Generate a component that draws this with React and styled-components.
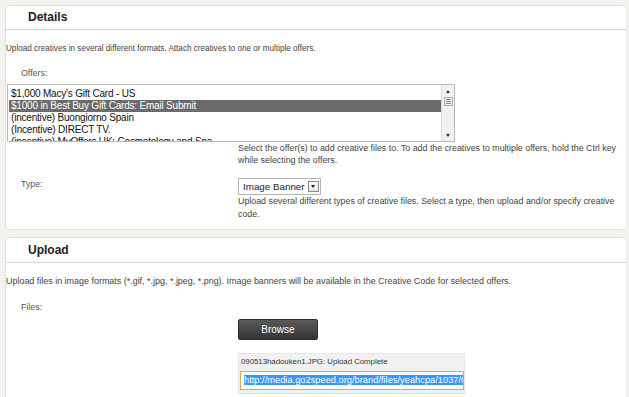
import React from 'react';
import styled, { createGlobalStyle } from 'styled-components';

const GlobalStyle = createGlobalStyle`
  html, body {
    margin: 0;
    padding: 0;
    background: #f3f2ee;
  }
  body {
    font-family: 'Liberation Sans', Arial, sans-serif;
    color: #3a3a3a;
  }
`;

const Page = styled.div`
  padding: 5px 2px 0 5px;
  height: 397px;
  overflow: hidden;
  box-sizing: border-box;
`;

const Panel = styled.section`
  background: #fff;
  border: 1px solid #e3e2dd;
  border-right: 1px solid #ecebe7;
  border-radius: 5px;
  padding-bottom: ${(p) => p.$pb || 8}px;
  margin-bottom: 7px;
`;

const PanelHeader = styled.h2`
  margin: 0;
  height: ${(p) => p.$h || 23}px;
  line-height: ${(p) => p.$h || 23}px;
  padding-left: 22px;
  font-size: 12px;
  font-weight: bold;
  color: #222;
  border-bottom: 1px solid #d6d6d6;
`;

const Intro = styled.p`
  margin: 12px 0 0 0;
  font-size: ${(p) => p.$fs || 8.4}px;
  line-height: 13px;
  color: #444;
`;

const Label = styled.div`
  padding-left: 15px;
  font-size: 8.8px;
  line-height: 13px;
  color: #555;
  margin-top: ${(p) => p.$mt || 0}px;
`;

const ListBox = styled.div`
  margin: 4px 0 0 1px;
  width: 448px;
  height: 58px;
  box-sizing: border-box;
  border: 1px solid #b9b9b9;
  display: flex;
  overflow: hidden;
  background: #fff;
`;

const ListItems = styled.div`
  flex: 1;
  padding-top: 3px;
  padding-left: 1px;
`;

const ListItem = styled.div`
  height: 12px;
  line-height: 12px;
  font-size: 10px;
  letter-spacing: -0.2px;
  padding-left: 2px;
  white-space: nowrap;
  color: ${(p) => (p.$selected ? '#fff' : '#111')};
  background: ${(p) => (p.$selected ? '#6b6b6b' : 'transparent')};
`;

const ScrollBar = styled.div`
  width: 12px;
  background: #f1f1f1;
  border-left: 1px solid #dcdcdc;
  display: flex;
  flex-direction: column;
  align-items: center;
`;

const Arrow = styled.div`
  width: 0;
  height: 0;
  border-left: 2.5px solid transparent;
  border-right: 2.5px solid transparent;
  ${(p) =>
    p.$up
      ? 'border-bottom: 3px solid #333; margin-top: 5px;'
      : 'border-top: 3px solid #333; margin-top: auto; margin-bottom: 4px;'}
`;

const Thumb = styled.div`
  width: 9px;
  height: 9px;
  margin-top: 4px;
  border: 1px solid #a9a9a9;
  background: #fafafa;
  box-sizing: border-box;
  display: flex;
  flex-direction: column;
  justify-content: center;
  align-items: center;
  gap: 1px;
  span {
    display: block;
    width: 5px;
    height: 1px;
    background: #888;
  }
`;

const FieldGrid = styled.div`
  display: grid;
  grid-template-columns: 232px 1fr;
  margin-top: ${(p) => p.$mt || 0}px;
  align-items: start;
`;

const Hint = styled.div`
  font-size: 8.85px;
  line-height: ${(p) => p.$lh || 12}px;
  color: #444;
  padding-right: 8px;
`;

const RowLabel = styled.div`
  padding-left: 15px;
  font-size: 8.8px;
  line-height: 17px;
  color: #555;
`;

const SelectBox = styled.div`
  display: inline-flex;
  align-items: center;
  height: 17px;
  box-sizing: border-box;
  border: 1px solid #b5b5b5;
  padding: 0 1px 0 4px;
  font-size: 9.8px;
  color: #222;
  gap: 3px;
`;

const SelectBtn = styled.span`
  width: 11px;
  height: 11px;
  box-sizing: border-box;
  border: 1px solid #8a8a8a;
  background: linear-gradient(#fdfdfd, #e4e4e4);
  display: flex;
  align-items: center;
  justify-content: center;
  &::after {
    content: '';
    border-left: 2.5px solid transparent;
    border-right: 2.5px solid transparent;
    border-top: 3px solid #222;
  }
`;

const BrowseButton = styled.button`
  width: 80px;
  height: 21px;
  border: 1px solid #2e2e2e;
  border-radius: 2px;
  background: linear-gradient(#5a5a5a, #343434);
  color: #fff;
  font-family: 'Liberation Sans', Arial, sans-serif;
  font-size: 10px;
  padding: 0;
  margin-top: 5px;
`;

const StatusBox = styled.div`
  margin-top: 13px;
  width: 227px;
  box-sizing: border-box;
  background: #f1f1f1;
  border: 1px solid #e6e6e6;
  padding: 2px 1px 3px 1px;
`;

const StatusText = styled.div`
  font-size: 7.8px;
  line-height: 12px;
  color: #333;
  padding-left: 1px;
`;

const UrlField = styled.div`
  margin-top: 3px;
  width: 224px;
  height: 19px;
  box-sizing: border-box;
  border: 1px solid #e3a54c;
  background: #fff;
  padding: 2px 2px 0 3px;
  overflow: hidden;
  white-space: nowrap;
  font-size: 9.3px;
  line-height: 13px;
  span {
    background: #3399ff;
    color: #fff;
  }
`;

const offers = [
  "$1,000 Macy's Gift Card - US",
  '$1000 in Best Buy Gift Cards: Email Submit',
  '(incentive) Buongiorno Spain',
  '(Incentive) DIRECT TV.',
  '(incentive) MyOffers UK: Cosmetology and Spa',
];

const App = () => (
  <>
    <GlobalStyle />
    <Page>
      <Panel $pb={8}>
        <PanelHeader>Details</PanelHeader>
        <Intro $fs={8.15}>Upload creatives in several different formats. Attach creatives to one or multiple offers.</Intro>
        <Label $mt={12}>Offers:</Label>
        <ListBox>
          <ListItems>
            {offers.map((o, i) => (
              <ListItem key={o} $selected={i === 1}>
                {o}
              </ListItem>
            ))}
          </ListItems>
          <ScrollBar>
            <Arrow $up />
            <Thumb>
              <span />
              <span />
              <span />
            </Thumb>
            <Arrow />
          </ScrollBar>
        </ListBox>
        <FieldGrid>
          <div />
          <Hint>
            Select the offer(s) to add creative files to. To add the creatives to multiple offers, hold the Ctrl key
            while selecting the offers.
          </Hint>
        </FieldGrid>
        <FieldGrid $mt={10}>
          <RowLabel>Type:</RowLabel>
          <div>
            <SelectBox>
              Image Banner
              <SelectBtn />
            </SelectBox>
            <Hint $lh={13}>
              Upload several different types of creative files. Select a type, then upload and/or specify creative
              code.
            </Hint>
          </div>
        </FieldGrid>
      </Panel>
      <Panel $pb={20}>
        <PanelHeader $h={24}>Upload</PanelHeader>
        <Intro $fs={8.95}>
          Upload files in image formats (*.gif, *.jpg, *.jpeg, *.png). Image banners will be available in the Creative
          Code for selected offers.
        </Intro>
        <Label $mt={13}>Files:</Label>
        <FieldGrid>
          <div />
          <div>
            <BrowseButton>Browse</BrowseButton>
            <StatusBox>
              <StatusText>090513hadouken1.JPG: Upload Complete</StatusText>
              <UrlField>
                <span>http://media.go2speed.org/brand/files/yeahcpa/1037/090513hadouken1.JPG</span>
              </UrlField>
            </StatusBox>
          </div>
        </FieldGrid>
      </Panel>
    </Page>
  </>
);

export default App;
